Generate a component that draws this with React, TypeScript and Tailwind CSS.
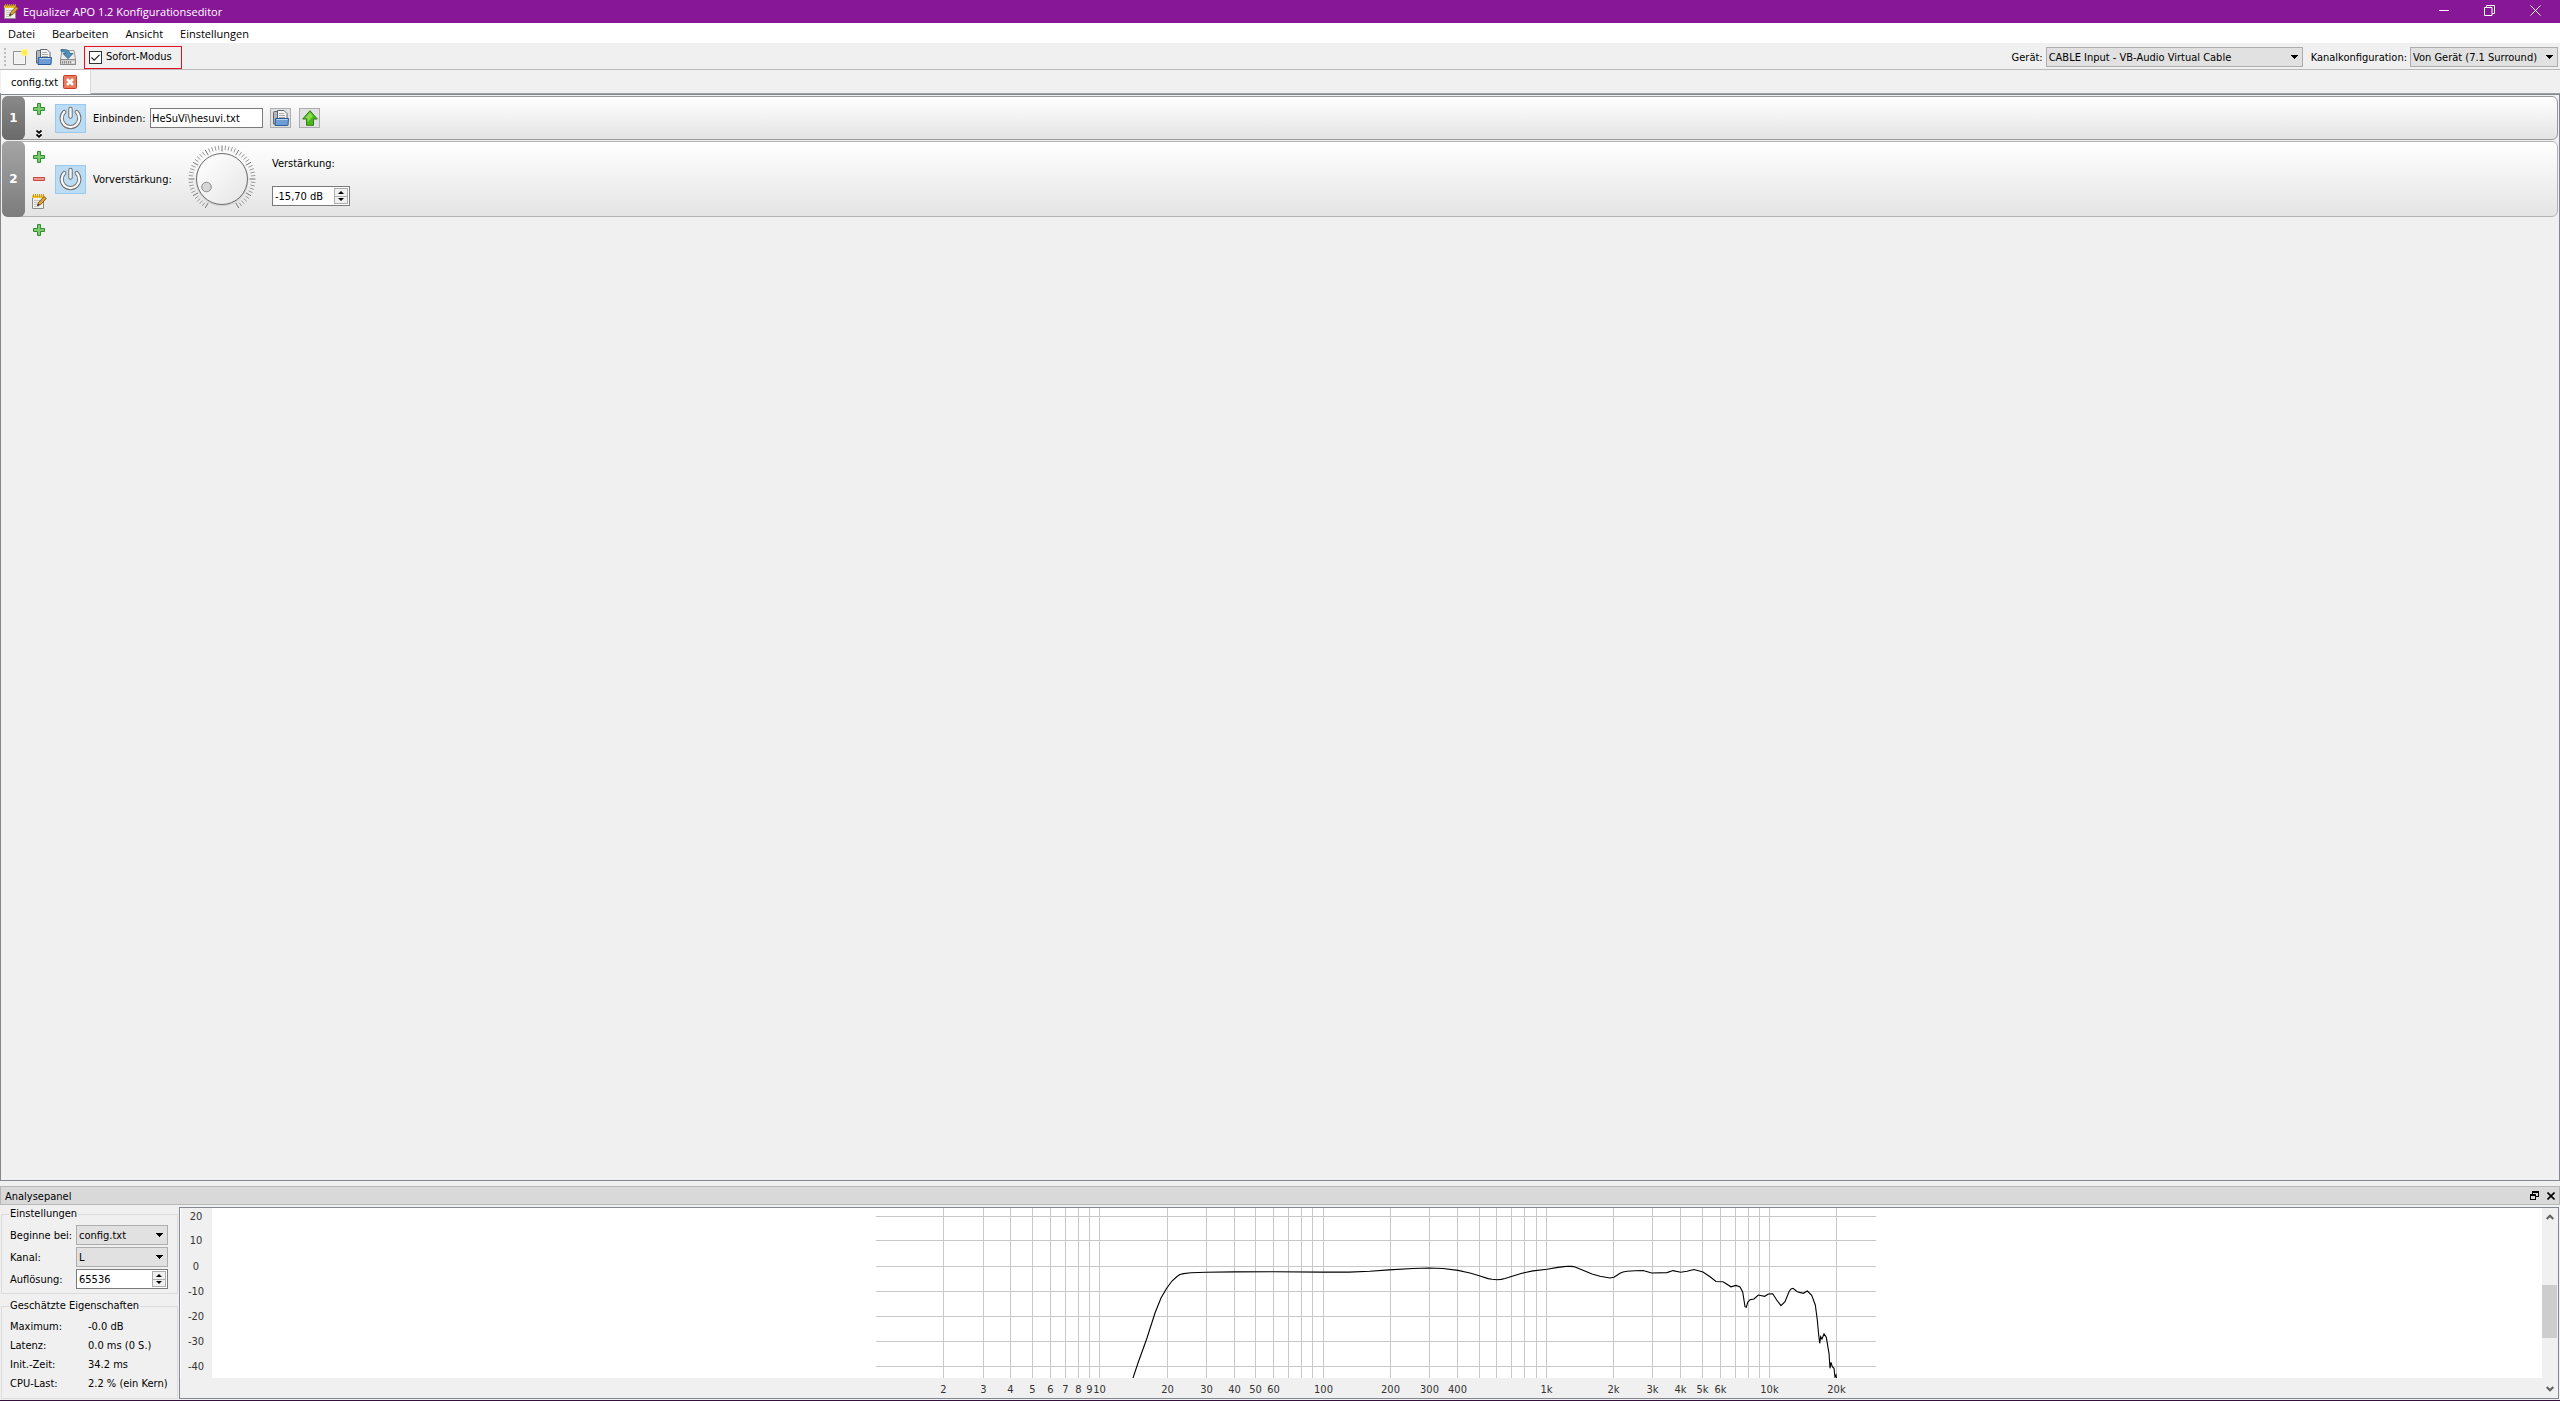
import { useState } from "react";
import type { ReactNode } from "react";

const DECADE = 223.3;

const xTicks = [1, 10, 100, 1000, 10000]
  .flatMap((base) => [1, 2, 3, 4, 5, 6, 7, 8, 9].map((n) => n * base))
  .filter((hz) => hz > 1 && hz <= 20000);

const xLabels: Record<number, string> = {
  2: "2", 3: "3", 4: "4", 5: "5", 6: "6", 7: "7", 8: "8", 9: "9", 10: "10",
  20: "20", 30: "30", 40: "40", 50: "50", 60: "60", 100: "100", 200: "200",
  300: "300", 400: "400", 1000: "1k", 2000: "2k", 3000: "3k", 4000: "4k",
  5000: "5k", 6000: "6k", 10000: "10k", 20000: "20k",
};

const yTicks = [
  { db: 20, y: 8 },
  { db: 10, y: 32 },
  { db: 0, y: 58 },
  { db: -10, y: 83 },
  { db: -20, y: 108 },
  { db: -30, y: 133 },
  { db: -40, y: 158 },
];

const response =
  "257,170 262,155 271,130 279,105 285,90 290.5,80.5 296,73 301,68.5 304,66.5 307.6,65.6 315,64.8 330,64.3 358,63.9 398,63.7 446,64.1 473,64.1 494,63.2 513,61.9 537,60.5 553,60 567,60.5 582,62.4 594,65 604,68 612,70.6 616,71.3 621,71.7 625,71.4 629,70.5 637,68 646,65.2 657,62.9 671,61.2 682,59.4 688,58.6 692,58.3 696,58.4 699,59 707,62.2 716,66 724,68.2 734,70 738,69.2 744,65.3 747,64 751,63.2 759,62.8 767,62.5 775.7,65 791,64.6 797,62.6 804.7,64.2 811,63.2 818,61.5 827,64 834,68.8 840,73.5 847,73.8 855,78.8 860,77.4 864,79 866.7,84 869,98.7 870.3,99.3 871.7,94.3 874,91.7 878,91 882.3,87 888.7,88.3 892.3,86 896.7,85.7 900.7,92 905,97.7 909,93.7 913,83.7 915,81 917,80.3 921.3,83.7 927.3,85.3 931.3,83 935.7,87.3 939.3,97 941.3,112 942.7,127 943.7,135.3 944.7,128.7 946,131 948,126 950.3,129.3 953,145.3 954,160.3 955,154.3 956.3,158.7 958,160.3 959,169 960,167 960.5,170";

const freqToX = (hz: number) => Math.round(Math.log10(hz) * DECADE);

/* ---------- Icons ---------- */

function NotepadIcon() {
  return (
    <svg width="16" height="16" viewBox="0 0 16 16">
      <path d="M1.500 2.500h11v12h-11z" fill="#f1f1ee" stroke="#8a8a86" />
      <path d="M3 6.500h8M3 8.500h6M3 10.500h6M3 12.500h5" stroke="#c4c4c0" />
      <path d="M1 1.500h12v2.500h-12z" fill="#efc22c" />
      <path d="M2.500 0v3M4.500 0v3M6.500 0v3M8.500 0v3M10.500 0v3M12.500 0v3" stroke="#c49a1c" />
      <path d="M6.500 11.500l1-3 5.500-6 2.300 2-5.500 6z" fill="#d9a03c" stroke="#6e4a12" strokeWidth=".8" />
      <path d="M6.300 11.900l.8-2.200 1.500 1.300z" fill="#222" />
    </svg>
  );
}

function NewIcon() {
  return (
    <svg width="16" height="16" viewBox="0 0 16 16">
      <path d="M1.500 2.500h12v13h-12z" fill="#f8f8f8" stroke="#8e8e8e" />
      <path d="M3 4h9v10H3z" fill="#f0f0f0" />
      <circle cx="12.500" cy="3.500" r="3.500" fill="#fff26a" />
      <circle cx="12.500" cy="3.500" r="1.800" fill="#f8ea50" />
    </svg>
  );
}

function OpenIcon() {
  return (
    <svg width="16" height="16" viewBox="0 0 16 16">
      <path d="M.5 14V2.500q0-1 1-1h3v12z" fill="#b4b8bd" stroke="#5f656c" />
      <path d="M4.500 10V.500h6.500l3 3V10z" fill="#f6f6f6" stroke="#5f656c" />
      <path d="M6 3.500h5M6 5.500h6M6 7.500h6" stroke="#a8a8a8" />
      <path d="M2.500 8.500h13l-.5 6.500q0 .5-.5.500h-12.500z" fill="#6d9ed8" stroke="#2c5a97" />
      <path d="M3.500 9.500h11" stroke="#b9d4f2" />
    </svg>
  );
}

function SaveIcon() {
  return (
    <svg width="16" height="16" viewBox="0 0 16 16">
      <path d="M2 1.500h12l1.500 9v5H.5v-5z" fill="#ececec" stroke="#9a9a9a" />
      <path d="M.5 10.500h15v5H.5z" fill="#d2d2d2" stroke="#8b8b8b" />
      <path d="M2.500 12v2.500M4.500 12v2.500M6.500 12v2.500M8.500 12v2.500M10.500 12v2.500" stroke="#8e8e8e" />
      <path d="M12 13.500h2" stroke="#fff" />
      <path d="M1 .5q8.500-.7 9 4h3L8 9.700 3 4.500h3.200Q5 2.500 1 2.300z" fill="#5590b8" stroke="#2c5f85" strokeWidth=".8" />
    </svg>
  );
}

function PlusIcon() {
  return (
    <svg width="12" height="12" viewBox="0 0 12 12">
      <path d="M4.500.5h3v4h4v3h-4v4h-3v-4h-4v-3h4z" fill="#7ccb70" stroke="#2f8f2f" />
    </svg>
  );
}

function MinusIcon() {
  return (
    <svg width="12" height="12" viewBox="0 0 12 12">
      <path d="M.5 4.500h11v3H.5z" fill="#ee9a93" stroke="#c74a42" />
    </svg>
  );
}

function ChevronsIcon() {
  return (
    <svg width="6" height="8" viewBox="0 0 6 8" fill="none" stroke="#000" strokeWidth="1.700">
      <path d="M.5.5L3 2.800 5.500.5M.5 4.500L3 6.800l2.500-2.300" />
    </svg>
  );
}

function PowerIcon() {
  return (
    <svg width="23" height="24" viewBox="0 0 23 24" fill="none" strokeLinecap="round">
      <path d="M5.300 6a8.800 8.800 0 1 0 12.400 0" stroke="#6f6f6f" strokeWidth="4.200" />
      <path d="M11.500 3v7.500" stroke="#6f6f6f" strokeWidth="4.400" />
      <path d="M5.300 6a8.800 8.800 0 1 0 12.400 0" stroke="#fafafa" strokeWidth="2.300" />
      <path d="M11.500 3v7.500" stroke="#fafafa" strokeWidth="2.400" />
    </svg>
  );
}

function UpArrowIcon() {
  return (
    <svg width="16" height="16" viewBox="0 0 16 16">
      <path d="M8 .7l7.300 8.300h-3.800v6.300h-7V9H.7z" fill="#4fb51f" stroke="#2f7f1a" />
      <path d="M8 2.300l-5 5.900h2.500v4L11 6z" fill="#86dc4c" />
    </svg>
  );
}

function CloseTabIcon() {
  return (
    <svg width="14" height="14" viewBox="0 0 14 14">
      <rect x=".5" y=".5" width="13" height="13" rx="1" fill="#e8795b" stroke="#cb3d28" />
      <path d="M4 4l6 6M10 4l-6 6" stroke="#fff" strokeWidth="2.600" />
    </svg>
  );
}

function Caret({ className = "" }: { className?: string }) {
  return (
    <svg width="7" height="4" viewBox="0 0 7 4" className={className} shapeRendering="crispEdges">
      <path d="M0 0h7L3.500 4z" fill="#000" />
    </svg>
  );
}

function Dial() {
  const ticks = Array.from({ length: 51 }, (_, i) => 120 + i * 6);
  return (
    <svg width="68" height="68" viewBox="-34 -34 68 68" role="slider" aria-label="Vorverstärkung" aria-valuenow={-15.7}>
      <defs>
        <linearGradient id="knob" x1="0" y1="0" x2="1" y2="1">
          <stop offset="0" stopColor="#ffffff" />
          <stop offset="0.550" stopColor="#f2f2f2" />
          <stop offset="1" stopColor="#e4e4e4" />
        </linearGradient>
      </defs>
      {ticks.map((deg, i) => {
        const a = (deg * Math.PI) / 180;
        const inner = i % 5 === 0 ? 27.5 : 29;
        return (
          <line
            key={deg}
            x1={Math.cos(a) * inner}
            y1={Math.sin(a) * inner}
            x2={Math.cos(a) * 33.5}
            y2={Math.sin(a) * 33.5}
            stroke={i % 5 === 0 ? "#777" : "#999"}
          />
        );
      })}
      <circle r="26.500" cy="1" fill="#d5d5d5" />
      <circle r="25.500" fill="url(#knob)" stroke="#6e6e6e" />
      <circle cx="-15.500" cy="8" r="4.800" fill="#d6d6d6" stroke="#8c8c8c" />
    </svg>
  );
}

/* ---------- Controls ---------- */

interface ComboProps {
  id: string;
  value: string;
  className: string;
}

function Combo({ id, value, className }: ComboProps) {
  return (
    <span className={`grid h-5 items-center ${className}`}>
      <select
        id={id}
        defaultValue={value}
        className="col-start-1 row-start-1 h-5 w-full appearance-none border border-[#adadad] bg-[#e1e1e1] pt-px pl-[2px] outline-none"
      >
        <option>{value}</option>
      </select>
      <Caret className="pointer-events-none col-start-1 row-start-1 mr-[5px] justify-self-end" />
    </span>
  );
}

function SpinBox({ id, value, className }: ComboProps) {
  const [text, setText] = useState(value);
  return (
    <span className={`flex h-5 border border-[#7a7a7a] bg-white p-px ${className}`}>
      <input
        id={id}
        type="text"
        value={text}
        onChange={(e) => setText(e.target.value)}
        className="w-0 min-w-0 flex-1 bg-transparent pt-px pl-px outline-none"
      />
      <span className="flex w-[14px] flex-col border border-[#adadad] bg-[#f0f0f0]">
        <button aria-label="Erhöhen" className="flex flex-1 items-center justify-center border-b border-[#adadad]">
          <svg width="6" height="3" viewBox="0 0 6 3"><path d="M0 3l3-3 3 3z" /></svg>
        </button>
        <button aria-label="Verringern" className="flex flex-1 items-center justify-center">
          <svg width="6" height="3" viewBox="0 0 6 3"><path d="M0 0l3 3 3-3z" /></svg>
        </button>
      </span>
    </span>
  );
}

function PowerButton() {
  return (
    <button aria-label="Ein/Aus" className="flex h-[29px] w-[31px] items-center justify-center border border-[#99c9ef] bg-[#bcdcf4]">
      <PowerIcon />
    </button>
  );
}

interface RowProps {
  index: number;
  height: string;
  border: string;
  badge: string;
  tools: ReactNode;
  children: ReactNode;
}

function FilterRow({ index, height, border, badge, tools, children }: RowProps) {
  return (
    <div className={`flex rounded-md border bg-gradient-to-b from-white to-[#e4e4e4] ${height} ${border}`}>
      <div className={`-my-px -ml-px flex w-[23px] items-center justify-center rounded-md font-['DejaVu_Sans'] text-xs font-bold text-white ${badge}`}>
        {index}
      </div>
      <div className="ml-[6px] flex w-4 flex-col items-center">{tools}</div>
      <div className="ml-2 flex items-center">
        <PowerButton />
        {children}
      </div>
    </div>
  );
}

function Plot() {
  return (
    <div className="flex min-w-0 flex-1 border border-[#828790] bg-[#f0f0f0]">
      <svg width="32" height="170" className="shrink-0 border-l border-white text-[11px]" fill="#333">
        {yTicks.map(({ db, y }) => (
          <text key={db} x="15" y={y + 4} textAnchor="middle">{db}</text>
        ))}
      </svg>
      <div className="flex min-w-0 flex-1 flex-col">
        <div className="flex h-[170px] justify-center bg-white pr-[2px]">
          <svg width="1000" height="170" viewBox="0 0 1000 170" className="shrink-0">
            <g stroke="#c8c8c8" shapeRendering="crispEdges">
              {xTicks.map((hz) => (
                <line key={hz} x1={freqToX(hz) + 0.5} x2={freqToX(hz) + 0.5} y1="0" y2="170" />
              ))}
              {yTicks.map(({ db, y }) => (
                <line key={db} x1="0" x2="1000" y1={y + 0.5} y2={y + 0.5} />
              ))}
            </g>
            <polyline points={response} fill="none" stroke="#000" strokeWidth="1.100" />
          </svg>
        </div>
        <div className="flex justify-center pr-[2px]">
          <svg width="1000" height="20" className="shrink-0 text-[11px]" fill="#333">
            {xTicks.filter((hz) => xLabels[hz]).map((hz) => (
              <text key={hz} x={freqToX(hz) + 0.5} y="15" textAnchor="middle">{xLabels[hz]}</text>
            ))}
          </svg>
        </div>
      </div>
      <div className="flex w-4 flex-col items-center bg-[#f0f0f0] py-[6px]">
        <svg width="8" height="6" viewBox="0 0 8 6" fill="none" stroke="#606060" strokeWidth="2"><path d="M.7 5L4 1.700 7.300 5" /></svg>
        <div className="flex w-full flex-1 flex-col pt-[65px]">
          <div className="mr-px h-[53px] bg-[#cdcdcd]" />
        </div>
        <svg width="8" height="6" viewBox="0 0 8 6" fill="none" stroke="#606060" strokeWidth="2"><path d="M.7 1L4 4.300 7.300 1" /></svg>
      </div>
    </div>
  );
}

const properties = [
  { label: "Maximum:", value: "-0.0 dB" },
  { label: "Latenz:", value: "0.0 ms (0 S.)" },
  { label: "Init.-Zeit:", value: "34.2 ms" },
  { label: "CPU-Last:", value: "2.2 % (ein Kern)" },
];

export default function App() {
  const [instant, setInstant] = useState(true);

  return (
    <div className="flex min-h-screen flex-col border-b border-[#35103a] bg-[#f0f0f0] font-['DejaVu_Sans_Condensed','Noto_Sans',sans-serif] text-[11px] leading-[14px] text-black">
      {/* Title bar */}
      <header className="flex h-[23px] items-center bg-[#881798] pl-[3px] font-['Open_Sans',sans-serif] text-white">
        <NotepadIcon />
        <h1 className="ml-1">Equalizer APO 1.2 Konfigurationseditor</h1>
        <div className="ml-auto flex h-full items-center pr-[2px] pb-[3px]">
          <button aria-label="Minimieren" className="flex w-[45px] justify-center">
            <svg width="10" height="10" stroke="#fff"><path d="M0 5.500h10" /></svg>
          </button>
          <button aria-label="Verkleinern" className="flex w-[46px] justify-center">
            <svg width="11" height="11" fill="none" stroke="#fff"><path d="M.5 2.500h7.500v8H.5zM2.500 2.500v-2h8v8h-2.500" /></svg>
          </button>
          <button aria-label="Schließen" className="flex w-[46px] justify-center">
            <svg width="11" height="11" stroke="#fff"><path d="M.5.5l10 10M10.500.5l-10 10" /></svg>
          </button>
        </div>
      </header>

      {/* Menu */}
      <nav className="flex h-5 items-center gap-[17px] bg-white pt-px pl-2 font-['Open_Sans',sans-serif]">
        <button>Datei</button>
        <button>Bearbeiten</button>
        <button>Ansicht</button>
        <button>Einstellungen</button>
      </nav>

      {/* Toolbar */}
      <div className="flex h-[27px] items-center border-b border-[#b8b8b8] pt-[2px] pl-1">
        <div className="h-[18px] w-0 border-l-2 border-dotted border-[#bdbdbd]" />
        <div className="ml-[6px] flex gap-2">
          <button aria-label="Neu"><NewIcon /></button>
          <button aria-label="Öffnen"><OpenIcon /></button>
          <button aria-label="Speichern"><SaveIcon /></button>
        </div>
        <label className="ml-2 flex h-[23px] w-[98px] items-center border border-[#e81123] pl-1">
          <span className="grid size-[13px]">
            <input
              type="checkbox"
              checked={instant}
              onChange={(e) => setInstant(e.target.checked)}
              className="col-start-1 row-start-1 size-[13px] appearance-none border border-[#333] bg-white"
            />
            {instant && (
              <svg width="13" height="13" className="pointer-events-none col-start-1 row-start-1" fill="none" stroke="#222" strokeWidth="1.200">
                <path d="M2.500 6.500l2.700 2.700 5.300-5.400" />
              </svg>
            )}
          </span>
          <span className="ml-1">Sofort-Modus</span>
        </label>
        <div className="ml-auto flex items-center pr-[2px]">
          <label htmlFor="device" className="mr-[3px] pt-px">Gerät:</label>
          <Combo id="device" value="CABLE Input - VB-Audio Virtual Cable" className="w-[257px]" />
          <label htmlFor="channels" className="mr-[3px] ml-2 pt-px">Kanalkonfiguration:</label>
          <Combo id="channels" value="Von Gerät (7.1 Surround)" className="w-[148px]" />
        </div>
      </div>

      {/* Tabs */}
      <div className="flex h-6 border-b border-[#a0a0a0]">
        <div className="-mb-px ml-px flex w-[90px] items-center border-r border-[#d9d9d9] bg-white pl-[10px]">
          <span className="pt-px">config.txt</span>
          <button aria-label="Tab schließen" className="mr-[13px] ml-auto"><CloseTabIcon /></button>
        </div>
      </div>

      {/* Filter list */}
      <main className="flex flex-1 flex-col gap-px border border-[#828790] p-px">
        <FilterRow
          index={1}
          height="h-11"
          border="border-[#9a9a9a]"
          badge="bg-gradient-to-b from-[#8a8a8a] to-[#6a6a6a]"
          tools={
            <>
              <button aria-label="Hinzufügen" className="mt-[6px]"><PlusIcon /></button>
              <button aria-label="Mehr" className="mt-auto mb-px"><ChevronsIcon /></button>
            </>
          }
        >
          <label htmlFor="include" className="ml-[7px] w-[57px] pt-px">Einbinden:</label>
          <input
            id="include"
            defaultValue="HeSuVi\hesuvi.txt"
            className="h-5 w-[113px] border border-[#7a7a7a] bg-white pt-px pl-px outline-none"
          />
          <button aria-label="Datei wählen" className="ml-[7px] flex h-5 w-[21px] items-center justify-center border border-[#adadad] bg-[#e1e1e1]"><OpenIcon /></button>
          <button aria-label="Datei öffnen" className="ml-2 flex h-5 w-[21px] items-center justify-center border border-[#adadad] bg-[#e1e1e1]"><UpArrowIcon /></button>
        </FilterRow>

        <FilterRow
          index={2}
          height="h-[76px]"
          border="border-[#b4b4b4]"
          badge="bg-gradient-to-b from-[#a5a5a5] to-[#7c7c7c]"
          tools={
            <>
              <button aria-label="Hinzufügen" className="mt-[9px]"><PlusIcon /></button>
              <button aria-label="Entfernen" className="mt-[10px]"><MinusIcon /></button>
              <button aria-label="Bearbeiten" className="mt-[9px]"><NotepadIcon /></button>
            </>
          }
        >
          <span className="ml-[7px] w-[95px] pt-px">Vorverstärkung:</span>
          <Dial />
          <div className="ml-4 flex flex-col gap-[15px] pt-[5px]">
            <label htmlFor="gain">Verstärkung:</label>
            <SpinBox id="gain" value="-15,70 dB" className="w-[78px]" />
          </div>
        </FilterRow>

        <button aria-label="Hinzufügen" className="mt-[6px] ml-[31px] self-start"><PlusIcon /></button>
      </main>

      {/* Analysis panel */}
      <section className="mt-[5px]">
        <div className="flex h-[19px] items-center border border-[#b8b8b8] bg-[#d9d9d9] pr-1 pl-1">
          <h2 className="pt-[2px]">Analysepanel</h2>
          <button aria-label="Andocken" className="ml-auto">
            <svg width="9" height="9" fill="none" stroke="#000" shapeRendering="crispEdges">
              <path d="M3 .5h6M2.500 0v3M8.500 0v6M6 5.500h3M3 1.500h6M0 3.500h6M0 4.500h6M.5 3v6M5.500 3v6M0 8.500h6" />
            </svg>
          </button>
          <button aria-label="Panel schließen" className="ml-2">
            <svg width="8" height="8" stroke="#000" strokeWidth="1.600"><path d="M.5.5l7 7M7.500.5l-7 7" /></svg>
          </button>
        </div>
        <div className="flex pt-[2px] pr-px pb-px">
          <div className="mr-px ml-px flex w-[177px] flex-col">
            <fieldset className="border border-[#dcdcdc] px-2 pb-1">
              <legend className="-ml-px px-[1px] leading-[14px]">Einstellungen</legend>
              <div className="mt-1 grid grid-cols-[66px_92px] items-center gap-y-[2px]">
                <label htmlFor="start" className="pt-px">Beginne bei:</label>
                <Combo id="start" value="config.txt" className="w-[92px]" />
                <label htmlFor="channel" className="pt-px">Kanal:</label>
                <Combo id="channel" value="L" className="w-[92px]" />
                <label htmlFor="resolution" className="pt-px">Auflösung:</label>
                <SpinBox id="resolution" value="65536" className="w-[92px]" />
              </div>
            </fieldset>
            <fieldset className="mt-[5px] flex-1 border border-[#dcdcdc] px-2">
              <legend className="-ml-px px-[1px] leading-[14px]">Geschätzte Eigenschaften</legend>
              <dl className="mt-1 grid grid-cols-[78px_1fr] leading-[19px]">
                {properties.map((p) => (
                  <div key={p.label} className="contents">
                    <dt>{p.label}</dt>
                    <dd className="whitespace-nowrap">{p.value}</dd>
                  </div>
                ))}
              </dl>
            </fieldset>
          </div>
          <Plot />
        </div>
      </section>
    </div>
  );
}
